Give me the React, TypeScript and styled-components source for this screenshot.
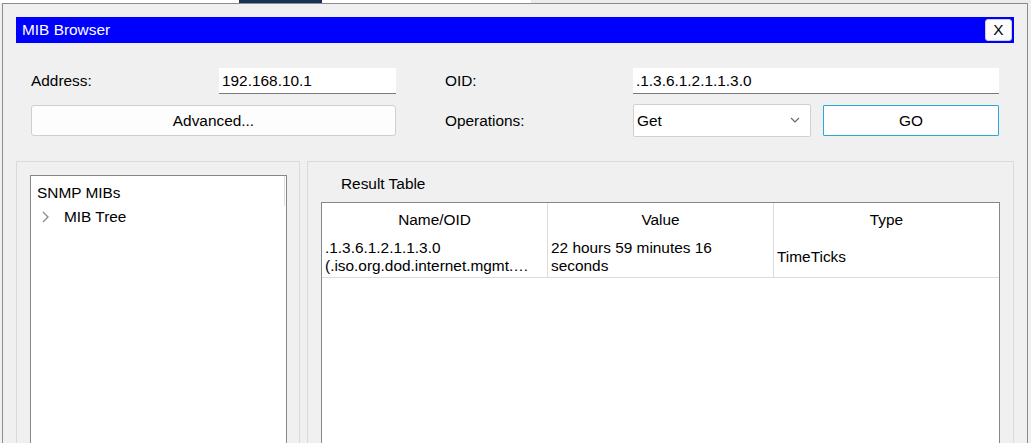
import React from "react";
import styled, { createGlobalStyle } from "styled-components";

const GlobalStyle = createGlobalStyle`
  html, body {
    margin: 0;
    padding: 0;
    background: #f0f0f0;
    overflow: hidden;
  }
  body {
    font-family: "Liberation Sans", Arial, sans-serif;
    font-size: 15.4px;
    color: #000;
  }
  * { box-sizing: border-box; }
`;

const Page = styled.div`
  width: 1031px;
  height: 443px;
  overflow: hidden;
  background: #f0f0f0;
`;

const TopStrip = styled.div`
  display: flex;
  height: 3px;
  background: #ebebeb;
`;

const StripSeg = styled.div<{ $w: number; $c: string }>`
  width: ${(p) => p.$w}px;
  background: ${(p) => p.$c};
`;

const Window = styled.div`
  margin-left: 2px;
  width: 1026px;
  height: 460px;
  border: 1px solid #8c8c8c;
  background: #f0f0f0;
  padding: 13px 13px 0 13px;
  display: flex;
  flex-direction: column;
`;

const TitleBar = styled.div`
  flex: none;
  height: 26px;
  background: #0000ff;
  color: #fff;
  display: flex;
  align-items: center;
  justify-content: space-between;
  padding: 0 2px 0 6px;
`;

const TitleText = styled.span`
  font-size: 15.4px;
  line-height: 18px;
`;

const CloseButton = styled.div`
  width: 27px;
  height: 22px;
  background: #fdfdfd;
  border: 1px solid #d0d0d0;
  border-radius: 3px;
  color: #000;
  display: flex;
  align-items: center;
  justify-content: center;
  font-size: 15.4px;
`;

const Form = styled.div`
  flex: none;
  display: flex;
  gap: 49px;
  padding: 25px 0 0 15px;
`;

const FieldGroup = styled.div<{ $cols: string }>`
  display: grid;
  grid-template-columns: ${(p) => p.$cols};
  grid-template-rows: 26px 33px;
  row-gap: 10px;
  align-items: center;
`;

const Label = styled.div`
  font-size: 15.4px;
  line-height: 18px;
`;

const TextInput = styled.div`
  height: 26px;
  background: #fff;
  border-bottom: 1px solid #7a7a7a;
  display: flex;
  align-items: center;
  padding: 0 3px;
  font-size: 15.4px;
`;

const Button = styled.div<{ $accent?: boolean }>`
  height: 31px;
  background: ${(p) => (p.$accent ? "#fff" : "#fdfdfd")};
  border: 1px solid ${(p) => (p.$accent ? "#2aa8d8" : "#cfcfcf")};
  border-radius: ${(p) => (p.$accent ? "1px" : "3px")};
  display: flex;
  align-items: center;
  justify-content: center;
  font-size: 15.4px;
`;

const WideButton = styled(Button)`
  grid-column: 1 / span 2;
`;

const OpsRow = styled.div`
  display: flex;
  align-items: center;
  gap: 12px;
`;

const Select = styled.div`
  width: 178px;
  height: 33px;
  background: #fff;
  border: 1px solid #d0d0d0;
  border-radius: 2px;
  display: flex;
  align-items: center;
  justify-content: space-between;
  padding: 0 10px 0 3px;
  font-size: 15.4px;
`;

const GoButton = styled(Button)`
  width: 176px;
  height: 31px;
`;

const Panels = styled.div`
  display: flex;
  gap: 7px;
  margin-top: 24px;
  flex: 1;
`;

const Panel = styled.div<{ $w: number }>`
  width: ${(p) => p.$w}px;
  border: 1px solid #dadada;
  padding: 13px 12px 0 13px;
  display: flex;
  flex-direction: column;
`;

const TreeBox = styled.div`
  position: relative;
  flex: 1;
  background: #fff;
  border: 1px solid #828790;
  padding: 5px 0 0 6px;
  &::after {
    content: "";
    position: absolute;
    right: 1px;
    top: 0;
    width: 1px;
    height: 30px;
    background: #dcdcdc;
  }
`;

const TreeRow = styled.div<{ $indent?: number }>`
  display: flex;
  align-items: center;
  height: 24px;
  padding-left: ${(p) => p.$indent ?? 0}px;
  font-size: 15.4px;
`;

const Expander = styled.span`
  display: inline-flex;
  width: 23px;
`;

const PanelTitle = styled.div`
  padding-left: 20px;
  line-height: 18px;
  font-size: 15.4px;
  margin-bottom: 9px;
`;

const Table = styled.div`
  flex: 1;
  width: 679px;
  background: #fff;
  border: 1px solid #828790;
`;

const TableRow = styled.div<{ $h: number; $divider?: boolean }>`
  display: grid;
  grid-template-columns: 226px 226px 1fr;
  height: ${(p) => p.$h}px;
  border-bottom: ${(p) => (p.$divider ? "1px solid #dcdcdc" : "none")};
`;

const HeaderCell = styled.div<{ $last?: boolean }>`
  display: flex;
  align-items: center;
  justify-content: center;
  font-size: 15.4px;
  border-right: ${(p) => (p.$last ? "none" : "1px solid #dcdcdc")};
`;

const Cell = styled.div<{ $last?: boolean }>`
  display: flex;
  flex-direction: column;
  justify-content: center;
  padding: 0 3px 0 3px;
  font-size: 15.4px;
  line-height: 18px;
  overflow: hidden;
  border-right: ${(p) => (p.$last ? "none" : "1px solid #dcdcdc")};
`;

const CellLine = styled.span`
  white-space: nowrap;
  overflow: hidden;
`;

const ChevronRight = () => (
  <svg width="10" height="12" viewBox="0 0 10 12">
    <polyline points="2,1 7,6 2,11" fill="none" stroke="#8a8a8a" strokeWidth="1.3" />
  </svg>
);

const ChevronDown = () => (
  <svg width="10" height="7" viewBox="0 0 10 7">
    <polyline points="1,1 5,5 9,1" fill="none" stroke="#666" strokeWidth="1.1" />
  </svg>
);

export default function App() {
  return (
    <Page>
      <GlobalStyle />
      <TopStrip>
        <StripSeg $w={239} $c="#ffffff" />
        <StripSeg $w={83} $c="#17305a" />
        <StripSeg $w={209} $c="#ffffff" />
      </TopStrip>
      <Window>
        <TitleBar>
          <TitleText>MIB Browser</TitleText>
          <CloseButton>X</CloseButton>
        </TitleBar>
        <Form>
          <FieldGroup $cols="188px 177px">
            <Label>Address:</Label>
            <TextInput>192.168.10.1</TextInput>
            <WideButton>Advanced...</WideButton>
          </FieldGroup>
          <FieldGroup $cols="188px 366px">
            <Label>OID:</Label>
            <TextInput>.1.3.6.1.2.1.1.3.0</TextInput>
            <Label>Operations:</Label>
            <OpsRow>
              <Select>
                <span>Get</span>
                <ChevronDown />
              </Select>
              <GoButton $accent>GO</GoButton>
            </OpsRow>
          </FieldGroup>
        </Form>
        <Panels>
          <Panel $w={284}>
            <TreeBox>
              <TreeRow>SNMP MIBs</TreeRow>
              <TreeRow $indent={4}>
                <Expander>
                  <ChevronRight />
                </Expander>
                MIB Tree
              </TreeRow>
            </TreeBox>
          </Panel>
          <Panel $w={707}>
            <PanelTitle>Result Table</PanelTitle>
            <Table>
              <TableRow $h={33}>
                <HeaderCell>Name/OID</HeaderCell>
                <HeaderCell>Value</HeaderCell>
                <HeaderCell $last>Type</HeaderCell>
              </TableRow>
              <TableRow $h={42} $divider>
                <Cell>
                  <CellLine>.1.3.6.1.2.1.1.3.0</CellLine>
                  <CellLine>(.iso.org.dod.internet.mgmt.…</CellLine>
                </Cell>
                <Cell>
                  <CellLine>22 hours 59 minutes 16</CellLine>
                  <CellLine>seconds</CellLine>
                </Cell>
                <Cell $last>
                  <CellLine>TimeTicks</CellLine>
                </Cell>
              </TableRow>
            </Table>
          </Panel>
        </Panels>
      </Window>
    </Page>
  );
}
